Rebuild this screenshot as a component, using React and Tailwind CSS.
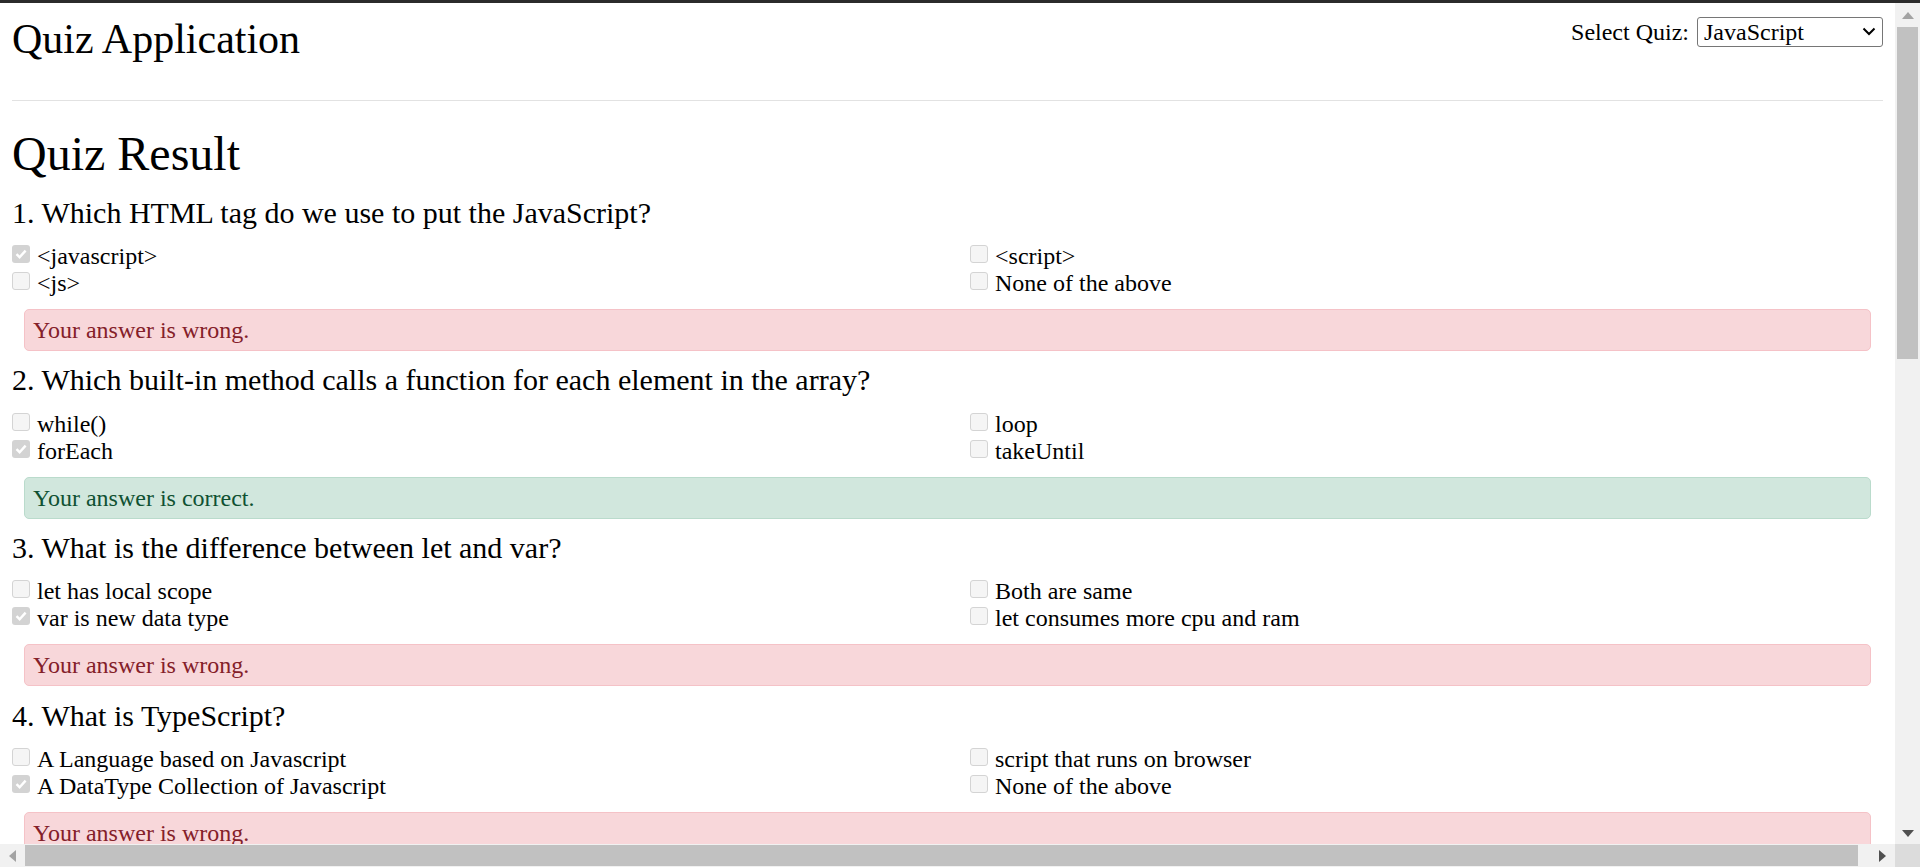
import React from "react";

const questions = [
  {
    title: "1. Which HTML tag do we use to put the JavaScript?",
    options: ["<javascript>", "<script>", "<js>", "None of the above"],
    selected: 0,
    correct: false,
  },
  {
    title: "2. Which built-in method calls a function for each element in the array?",
    options: ["while()", "loop", "forEach", "takeUntil"],
    selected: 2,
    correct: true,
  },
  {
    title: "3. What is the difference between let and var?",
    options: ["let has local scope", "Both are same", "var is new data type", "let consumes more cpu and ram"],
    selected: 2,
    correct: false,
  },
  {
    title: "4. What is TypeScript?",
    options: ["A Language based on Javascript", "script that runs on browser", "A DataType Collection of Javascript", "None of the above"],
    selected: 2,
    correct: false,
  },
];

const CheckBox = ({ checked }) =>
  checked ? (
    <span className="w-[18px] h-[18px] mt-[2px] shrink-0 rounded-[3px] bg-[#d3d3d3] flex items-center justify-center">
      <svg width="14" height="14" viewBox="0 0 14 14">
        <path d="M2.5 7.2 L5.6 10.2 L11.6 3.6" fill="none" stroke="#fff" strokeWidth="2.4" />
      </svg>
    </span>
  ) : (
    <span className="w-[18px] h-[18px] mt-[2px] shrink-0 rounded-[3px] border border-[#d4d4d4] bg-[#f5f5f5]" />
  );

const QuestionBlock = ({ q }) => (
  <div className="mb-[11.5px]">
    <h4 className="text-[30px] leading-[35.3px] mb-[13px]">{q.title}</h4>
    <div className="grid grid-cols-[958px_1fr]">
      {q.options.map((opt, i) => (
        <label key={i} className="flex items-start gap-[7px] h-[27px] text-[24px] leading-[27px]">
          <CheckBox checked={q.selected === i} />
          <span>{opt}</span>
        </label>
      ))}
    </div>
    <div
      className={`mx-3 mt-3 border rounded-[5px] px-[8px] py-[6px] text-[24px] leading-[28px] ${
        q.correct
          ? "bg-[#d1e7dd] border-[#badbcc] text-[#0f5132]"
          : "bg-[#f8d7da] border-[#f5c2c7] text-[#842029]"
      }`}
    >
      {q.correct ? "Your answer is correct." : "Your answer is wrong."}
    </div>
  </div>
);

const VScrollbar = () => (
  <div className="w-[25px] shrink-0 bg-[#f1f1f1] flex flex-col">
    <div className="h-[24px] flex items-center justify-center">
      <svg width="12" height="7" viewBox="0 0 12 7">
        <polygon points="6,0 12,7 0,7" fill="#a3a3a3" />
      </svg>
    </div>
    <div className="h-[332px] mx-[2px] bg-[#c1c1c1]" />
    <div className="flex-1" />
    <div className="h-[22px] flex items-center justify-center">
      <svg width="12" height="7" viewBox="0 0 12 7">
        <polygon points="0,0 12,0 6,7" fill="#505050" />
      </svg>
    </div>
  </div>
);

const HScrollbar = () => (
  <div className="h-[23px] shrink-0 flex bg-[#f1f1f1]">
    <div className="w-[25px] flex items-center justify-center">
      <svg width="7" height="12" viewBox="0 0 7 12">
        <polygon points="7,0 7,12 0,6" fill="#a3a3a3" />
      </svg>
    </div>
    <div className="w-[1833px] my-[1px] bg-[#c1c1c1]" />
    <div className="flex-1 flex items-center justify-end pr-[9px]">
      <svg width="7" height="12" viewBox="0 0 7 12">
        <polygon points="0,0 7,6 0,12" fill="#505050" />
      </svg>
    </div>
    <div className="w-[25px] bg-[#dcdcdc]" />
  </div>
);

export default function App() {
  return (
    <div className="h-[867px] w-full overflow-hidden flex flex-col border-t-[3px] border-[#2b2b2b] bg-white text-black font-['Liberation_Serif',_'Times_New_Roman',_serif]">
      <div className="flex flex-1 min-h-0">
        <main className="flex-1 min-w-0 overflow-hidden px-3">
          <header className="flex justify-between items-start pt-[11px]">
            <h1 className="text-[42px] leading-[50px]">Quiz Application</h1>
            <div className="flex items-center gap-[8px] text-[24px]">
              <span>Select Quiz:</span>
              <div className="relative">
                <select
                  defaultValue="javascript"
                  className="appearance-none block w-[186px] h-[30px] border border-[#767676] rounded-[3px] pl-[6px] pr-[30px] bg-white text-[24px] leading-[28px]"
                >
                  <option value="javascript">JavaScript</option>
                  <option value="aspnet">ASP.NET</option>
                  <option value="csharp">C# and .NET Framework</option>
                  <option value="design">Design Patterns</option>
                </select>
                <svg
                  className="absolute right-[7px] top-[10px] pointer-events-none"
                  width="14"
                  height="9"
                  viewBox="0 0 14 9"
                >
                  <path d="M1.5 1.5 L7 7 L12.5 1.5" fill="none" stroke="#000" strokeWidth="2" />
                </svg>
              </div>
            </div>
          </header>
          <hr className="mt-[36px] border-0 h-px bg-[#e2e2e2]" />
          <h1 className="text-[48px] leading-[57.6px] mt-[24px] mb-[12px]">Quiz Result</h1>
          {questions.map((q, i) => (
            <QuestionBlock key={i} q={q} />
          ))}
        </main>
        <VScrollbar />
      </div>
      <HScrollbar />
    </div>
  );
}
